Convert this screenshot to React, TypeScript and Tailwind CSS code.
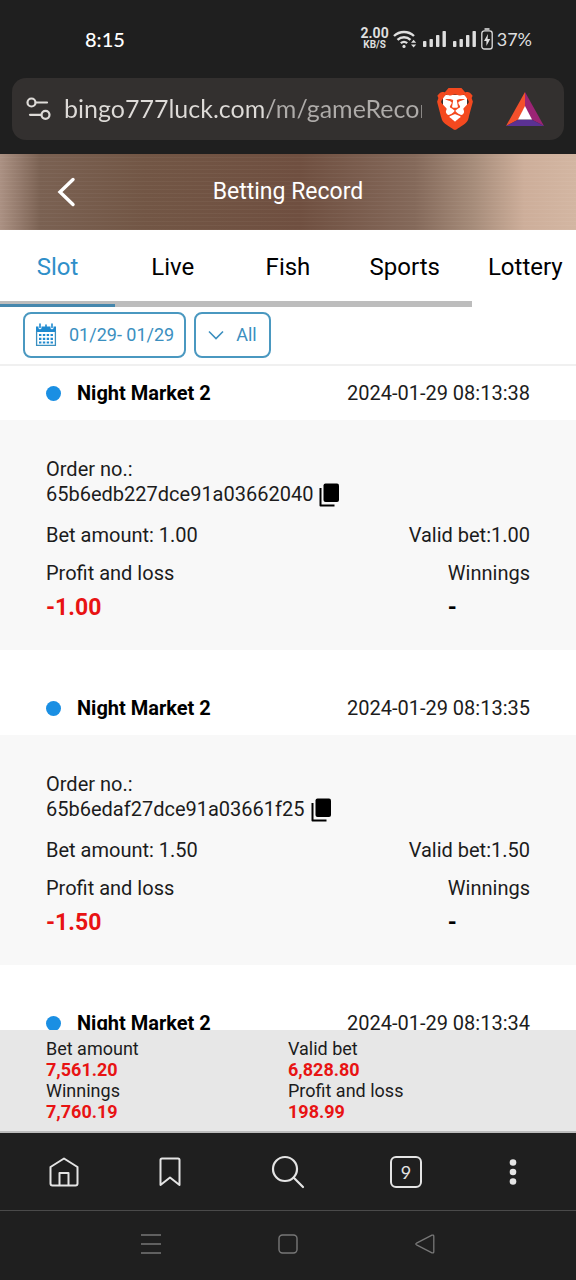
import { useState } from 'react';
import { SiBrave } from 'react-icons/si';

type BetRecord = {
  game: string;
  time: string;
  orderNo: string;
  bet: string;
  validBet: string;
  profit: string;
  winnings: string;
};

const TABS = ['Slot', 'Live', 'Fish', 'Sports', 'Lottery'];

const RECORDS: BetRecord[] = [
  {
    game: 'Night Market 2',
    time: '2024-01-29 08:13:38',
    orderNo: '65b6edb227dce91a03662040',
    bet: '1.00',
    validBet: '1.00',
    profit: '-1.00',
    winnings: '-',
  },
  {
    game: 'Night Market 2',
    time: '2024-01-29 08:13:35',
    orderNo: '65b6edaf27dce91a03661f25',
    bet: '1.50',
    validBet: '1.50',
    profit: '-1.50',
    winnings: '-',
  },
  {
    game: 'Night Market 2',
    time: '2024-01-29 08:13:34',
    orderNo: '65b6edae27dce91a03661e9c',
    bet: '1.50',
    validBet: '1.50',
    profit: '-1.50',
    winnings: '-',
  },
];

const TOTALS = [
  { label: 'Bet amount', value: '7,561.20' },
  { label: 'Valid bet', value: '6,828.80' },
  { label: 'Winnings', value: '7,760.19' },
  { label: 'Profit and loss', value: '198.99' },
];

function SignalIcon() {
  return (
    <svg viewBox="0 0 24 18" className="h-[18px] w-6" fill="currentColor" aria-hidden>
      <rect x="0" y="11" width="3.4" height="6" rx="0.8" />
      <rect x="6.5" y="9" width="3.4" height="8" rx="0.8" />
      <rect x="13" y="5" width="3.4" height="12" rx="0.8" />
      <rect x="19.5" y="1" width="3.4" height="16" rx="0.8" />
    </svg>
  );
}

function StatusBar() {
  return (
    <div className="flex h-[78px] shrink-0 items-center justify-between pr-11 pl-[85px] text-[#dedede]">
      <span className="font-['Lato','Noto_Sans',sans-serif] text-xl font-medium text-white">8:15</span>
      <div className="flex items-center">
        <div className="mr-1 flex flex-col items-center font-['Roboto',sans-serif] font-bold">
          <span className="text-sm leading-3">2.00</span>
          <span className="text-[10px] leading-3">KB/S</span>
        </div>
        <svg viewBox="0 0 24 20" className="mr-1.5 h-5 w-6" fill="none" stroke="currentColor" strokeWidth="2.4" aria-hidden>
          <path d="M1 7a14.5 14.5 0 0 1 20 0" />
          <path d="M4.5 10.8a9.5 9.5 0 0 1 13 0" />
          <path d="M7.8 14.2a5 5 0 0 1 6.4 0" />
          <circle cx="11" cy="17.4" r="1.6" fill="currentColor" stroke="none" />
          <path d="M18 13.8l2.6-3 2.6 3zM18 15.4l2.6 3 2.6-3z" fill="currentColor" stroke="none" />
        </svg>
        <div className="mr-1 flex gap-1.5">
          <SignalIcon />
          <SignalIcon />
        </div>
        <svg viewBox="0 0 12 22" className="mr-1 h-[22px] w-3" fill="none" stroke="currentColor" aria-hidden>
          <path d="M3.5 1h5" strokeWidth="1.6" />
          <rect x="0.8" y="2.8" width="10.4" height="18.2" rx="2.6" strokeWidth="1.3" />
          <path d="M7 6L3 13h2.4v5L9.2 11H6.6z" fill="currentColor" stroke="none" />
        </svg>
        <span className="font-['Lato','Noto_Sans',sans-serif] text-lg">37%</span>
      </div>
    </div>
  );
}

function AddressBar() {
  return (
    <div className="shrink-0 px-3 pb-[14px]">
      <div className="flex h-[62px] items-center rounded-[14px] bg-[#33302f] pr-5 pl-[14px]">
        <button type="button" aria-label="Site settings" className="mr-3 shrink-0 text-[#dedbd8]">
          <svg viewBox="0 0 26 26" className="size-[26px]" fill="none" stroke="currentColor" strokeWidth="2.2" strokeLinecap="round">
            <circle cx="5.5" cy="6.5" r="4" />
            <path d="M9.8 6.5H21" />
            <circle cx="19.5" cy="18.8" r="4" />
            <path d="M4 18.8h11.2" />
          </svg>
        </button>
        <input
          type="text"
          aria-label="Address"
          defaultValue="bingo777luck.com/m/gameRecord"
          className="min-w-0 flex-1 bg-linear-to-r from-[#dedbd8] from-57% to-[#aeaba9] to-57% bg-clip-text font-['Lato','Noto_Sans',sans-serif] text-[25px] text-transparent outline-none"
        />
        <button type="button" aria-label="Brave Shields" className="ml-3 grid shrink-0 place-items-center">
          <span className="col-start-1 row-start-1 h-7 w-6 rounded-b-full bg-white" />
          <SiBrave className="col-start-1 row-start-1 size-[42px] text-[#f4491f]" />
        </button>
        <button type="button" aria-label="Brave Rewards" className="ml-[30px] shrink-0">
          <svg viewBox="0 0 38 34" className="h-[34px] w-[38px]" aria-hidden>
            <path d="M19 0L0 34l12.5-6.5L19 15z" fill="#f4502c" />
            <path d="M19 0l19 34-12.5-6.5L19 15z" fill="#9b2475" />
            <path d="M0 34h38l-12.5-6.5h-13z" fill="#5b3193" />
            <path d="M19 14L12 27.5h14z" fill="#fff" />
          </svg>
        </button>
      </div>
    </div>
  );
}

function PageHeader() {
  return (
    <header className="grid h-[76px] shrink-0 grid-cols-[1fr_auto_1fr] items-center bg-[repeating-linear-gradient(0deg,rgba(255,255,255,0.04)_0_1px,transparent_1px_4px),linear-gradient(90deg,#ab9183_0%,#7a6152_7%,#725645_25%,#6f4f40_52%,#84695a_72%,#a58b79_82%,#cdae9a_91%,#d3b6a2_100%)] px-[52px] text-white">
      <button type="button" aria-label="Back" className="w-7 justify-self-start">
        <svg viewBox="0 0 28 32" className="h-8 w-7" fill="none" stroke="currentColor" strokeWidth="3.4" strokeLinecap="round">
          <path d="M21 3.5L8 16l13 12.5" />
        </svg>
      </button>
      <h1 className="text-[23px]">Betting Record</h1>
    </header>
  );
}

function CalendarIcon() {
  return (
    <svg viewBox="0 0 22 24" className="h-6 w-[22px]" aria-hidden>
      <path d="M1 3.5h2.5v1.2a1.5 1.5 0 0 0 3 0V3.5h9v1.2a1.5 1.5 0 0 0 3 0V3.5H21V9H1z" fill="#1f8ad0" />
      <path d="M5 1v3.5M17 1v3.5M11 2v2" stroke="#1f8ad0" strokeWidth="1.6" strokeLinecap="round" />
      <path d="M1.6 8v14.4h18.8V8" fill="none" stroke="currentColor" strokeWidth="1.3" />
      <path d="M4 12h14M4 15.8h14M4 19.5h14" stroke="#1f8ad0" strokeWidth="2.2" strokeDasharray="2.4 1.45" />
    </svg>
  );
}

function CopyIcon() {
  return (
    <svg viewBox="0 0 21 24" className="h-6 w-[21px]" aria-hidden>
      <rect x="4.5" y="0.5" width="15.5" height="18.5" rx="2" fill="#000" />
      <path d="M1.5 5v17.5h14" fill="none" stroke="#000" strokeWidth="2" strokeLinejoin="round" />
    </svg>
  );
}

function RecordCard({ record }: { record: BetRecord }) {
  return (
    <article className="mb-[31px] text-xl leading-[25px] text-[#1c1c1c]">
      <div className="flex h-[54px] items-center justify-between px-[46px]">
        <h2 className="flex items-center gap-4 font-bold text-black">
          <span className="size-[15px] rounded-full bg-[#1a8fe3]" />
          {record.game}
        </h2>
        <time>{record.time}</time>
      </div>
      <div className="bg-[#f8f8f8] px-[46px] pt-[37px] pb-[30px]">
        <p>Order no.:</p>
        <div className="flex items-center gap-1.5">
          <span>{record.orderNo}</span>
          <button type="button" aria-label="Copy order number">
            <CopyIcon />
          </button>
        </div>
        <div className="mt-4 flex justify-between">
          <span>Bet amount: {record.bet}</span>
          <span>Valid bet:{record.validBet}</span>
        </div>
        <div className="mt-[13px] flex justify-between">
          <div>
            <p>Profit and loss</p>
            <p className="mt-[9px] text-[23px] font-bold text-[#e81313]">{record.profit}</p>
          </div>
          <div>
            <p>Winnings</p>
            <p className="mt-[9px] text-[23px] font-bold text-black">{record.winnings}</p>
          </div>
        </div>
      </div>
    </article>
  );
}

function BrowserNav() {
  return (
    <nav className="grid h-[78px] shrink-0 grid-cols-[1fr_118px_118px_118px_1fr] place-items-center border-b border-[#4a4a4a] px-4 text-[#e4e4e4]">
      <button type="button" aria-label="Home">
        <svg viewBox="0 0 32 32" className="size-8" fill="none" stroke="currentColor" strokeWidth="2" strokeLinejoin="round">
          <path d="M2.5 11L16 2.5 29.5 11v16.5a2 2 0 0 1-2 2h-23a2 2 0 0 1-2-2z" />
          <path d="M11.5 29V17h9v12" />
        </svg>
      </button>
      <button type="button" aria-label="Bookmarks">
        <svg viewBox="0 0 24 32" className="h-8 w-6" fill="none" stroke="currentColor" strokeWidth="2" strokeLinejoin="round">
          <path d="M2.5 4A1.5 1.5 0 0 1 4 2.5h16A1.5 1.5 0 0 1 21.5 4v25L12 21.5 2.5 29z" />
        </svg>
      </button>
      <button type="button" aria-label="Search">
        <svg viewBox="0 0 34 34" className="size-[34px]" fill="none" stroke="currentColor" strokeWidth="2.2" strokeLinecap="round">
          <circle cx="14" cy="14" r="12" />
          <path d="M22.8 22.8L32 32" />
        </svg>
      </button>
      <button
        type="button"
        aria-label="9 open tabs"
        className="flex size-8 items-center justify-center rounded-md border-2 border-current font-['Lato','Noto_Sans',sans-serif] text-lg"
      >
        9
      </button>
      <button type="button" aria-label="Menu">
        <svg viewBox="0 0 32 32" className="size-8" fill="currentColor">
          <circle cx="16" cy="6.5" r="3.3" />
          <circle cx="16" cy="16" r="3.3" />
          <circle cx="16" cy="25.5" r="3.3" />
        </svg>
      </button>
    </nav>
  );
}

function SystemNav() {
  return (
    <nav className="flex h-[69px] shrink-0 items-center justify-around px-[82px] pb-1 text-[#777]">
      <button type="button" aria-label="Recent apps">
        <svg viewBox="0 0 20 20" className="size-5" fill="none" stroke="currentColor" strokeWidth="1.5">
          <path d="M0 1h20M0 10h20M0 19h20" />
        </svg>
      </button>
      <button type="button" aria-label="Home screen">
        <svg viewBox="0 0 20 20" className="size-5" fill="none" stroke="currentColor" strokeWidth="1.4">
          <rect x="1" y="1" width="18" height="18" rx="3.5" />
        </svg>
      </button>
      <button type="button" aria-label="Go back">
        <svg viewBox="0 0 20 20" className="size-5" fill="none" stroke="currentColor" strokeWidth="1.3" strokeLinejoin="round">
          <path d="M1.5 9.2L17 1.2c1-.4 1.8 0 1.8 1v15.6c0 1-.8 1.4-1.8 1L1.5 10.8c-.9-.5-.9-1.1 0-1.6z" />
        </svg>
      </button>
    </nav>
  );
}

export default function App() {
  const [tab, setTab] = useState('Slot');

  return (
    <div className="flex h-screen flex-col bg-[#1f1f1f] font-['Roboto','Noto_Sans',sans-serif]">
      <StatusBar />
      <AddressBar />
      <main className="flex min-h-0 flex-1 flex-col bg-white">
        <PageHeader />
        <div className="flex h-[71px] shrink-0 overflow-x-auto pt-0.5 text-2xl [scrollbar-width:none]">
          {TABS.map((name) => (
            <button
              key={name}
              type="button"
              onClick={() => setTab(name)}
              className={`min-w-1/5 shrink-0 px-6 ${name === tab ? 'text-[#2f8fc9]' : 'text-black'}`}
            >
              {name}
            </button>
          ))}
        </div>
        <div className="flex h-1.5 w-[82%] shrink-0 items-end bg-[#bdbdbd]">
          <div className="h-[3px] w-[115px] bg-[#4587ad]" />
        </div>
        <div className="flex h-[59px] shrink-0 items-start gap-2 border-b-2 border-[#f0f0f0] px-[23px] pt-[5px] text-lg text-[#3b8fbf]">
          <button type="button" className="flex h-[46px] items-center gap-3 rounded-lg border-2 border-[#4a98c0] px-2.5">
            <CalendarIcon />
            01/29- 01/29
          </button>
          <button type="button" className="flex h-[46px] items-center gap-3 rounded-lg border-2 border-[#4a98c0] px-3">
            <svg viewBox="0 0 16 10" className="h-2.5 w-4" fill="none" stroke="currentColor" strokeWidth="1.6" aria-hidden>
              <path d="M1 1.5l7 7 7-7" />
            </svg>
            All
          </button>
        </div>
        <section className="min-h-0 flex-1 overflow-y-auto [scrollbar-width:none]">
          {RECORDS.map((record) => (
            <RecordCard key={record.time} record={record} />
          ))}
        </section>
        <dl className="grid h-[103px] shrink-0 grid-cols-2 content-start border-b-2 border-[#bcbcbc] bg-[#e7e7e7] px-[46px] pt-2 text-lg leading-[21px] text-[#1c1c1c]">
          {TOTALS.map((total) => (
            <div key={total.label}>
              <dt>{total.label}</dt>
              <dd className="font-bold text-[#e81313]">{total.value}</dd>
            </div>
          ))}
        </dl>
      </main>
      <BrowserNav />
      <SystemNav />
    </div>
  );
}
